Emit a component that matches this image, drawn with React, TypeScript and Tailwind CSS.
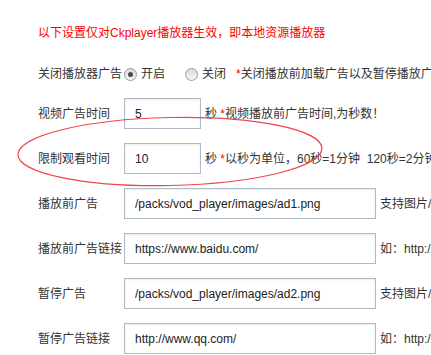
import React from "react";

const FONT = `"Liberation Sans", "Noto Sans CJK SC", sans-serif`;

function Radio({ checked }: { checked?: boolean }) {
  return (
    <span className="flex h-[13px] w-[13px] shrink-0 items-center justify-center rounded-full border border-[#9c9c9c] bg-linear-to-b from-[#d9d9d9] to-[#f7f7f7]">
      {checked && <span className="h-[5px] w-[5px] rounded-full bg-[#4a4a4a]" />}
    </span>
  );
}

function Field({
  label,
  value,
  wide,
  children,
}: {
  label: string;
  value: string;
  wide?: boolean;
  children?: React.ReactNode;
}) {
  return (
    <div className="mt-[14px] flex h-[31px] items-center">
      <span className="w-[86px] shrink-0">{label}</span>
      <input
        readOnly
        value={value}
        className={`h-[31px] shrink-0 border border-[#aebbc6] bg-white px-[10px] text-[12px] text-[#222] shadow-[inset_0_1px_2px_rgba(0,0,0,0.08)] outline-none ${
          wide ? "w-[252px]" : "w-[77px]"
        }`}
        style={{ fontFamily: FONT }}
      />
      <span className="ml-[4px] whitespace-pre">{children}</span>
    </div>
  );
}

export default function App() {
  return (
    <div
      className="relative h-[355px] w-[431px] overflow-hidden whitespace-nowrap bg-white pl-[38px] text-[12px] text-[#333]"
      style={{ fontFamily: FONT }}
    >
      <div className="pt-[24px] leading-[18px] text-[#ff0000]">
        以下设置仅对Ckplayer播放器生效，即本地资源播放器
      </div>

      {/* radio row */}
      <div className="mt-[22px] flex h-[20px] items-center">
        <span className="w-[86px] shrink-0">关闭播放器广告</span>
        <Radio checked />
        <span className="ml-[4px]">开启</span>
        <span className="ml-[20px]">
          <Radio />
        </span>
        <span className="ml-[4px]">关闭</span>
        <span className="ml-[10px]">
          <span className="text-[#ff0000]">*</span>关闭播放前加载广告以及暂停播放广告
        </span>
      </div>

      <Field label="视频广告时间" value="5">
        秒 <span className="text-[#ff0000]">*</span>视频播放前广告时间,为秒数！
      </Field>
      <Field label="限制观看时间" value="10">
        秒 <span className="text-[#ff0000]">*</span>以秒为单位，60秒=1分钟  120秒=2分钟
      </Field>
      <Field label="播放前广告" value="/packs/vod_player/images/ad1.png" wide>
        支持图片/视频格式
      </Field>
      <Field label="播放前广告链接" value="https://www.baidu.com/" wide>
        如：http://www.baidu.com/
      </Field>
      <Field label="暂停广告" value="/packs/vod_player/images/ad2.png" wide>
        支持图片/视频格式
      </Field>
      <Field label="暂停广告链接" value="http://www.qq.com/" wide>
        如：http://www.qq.com/
      </Field>

      {/* hand-drawn highlight ellipse */}
      <svg
        className="pointer-events-none absolute left-0 top-0"
        width="431"
        height="355"
        viewBox="0 0 431 355"
        aria-hidden="true"
      >
        <ellipse
          cx="170"
          cy="151.5"
          rx="152"
          ry="34"
          transform="rotate(-1.2 170 151.5)"
          fill="none"
          stroke="#f0464a"
          strokeWidth="1.2"
        />
      </svg>
    </div>
  );
}
